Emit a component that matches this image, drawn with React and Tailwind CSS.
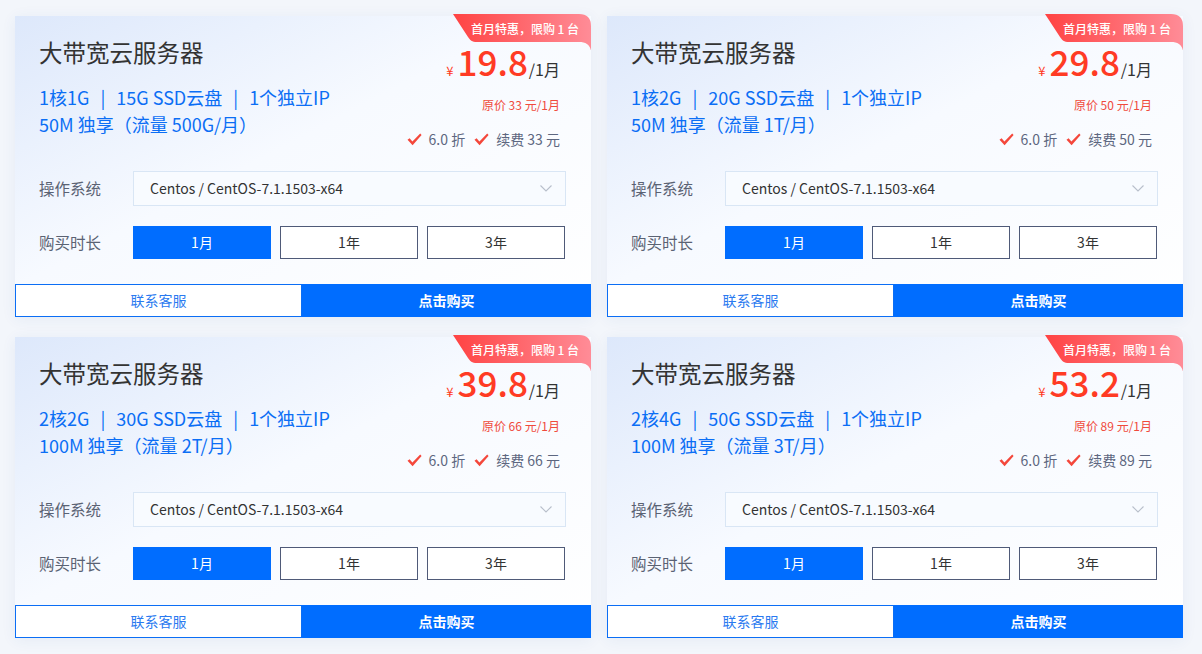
import React from "react";

const cards = [
  { spec1: ["1核1G", "15G SSD云盘", "1个独立IP"], spec2: "50M 独享（流量 500G/月）", price: "19.8", orig: "33" },
  { spec1: ["1核2G", "20G SSD云盘", "1个独立IP"], spec2: "50M 独享（流量 1T/月）", price: "29.8", orig: "50" },
  { spec1: ["2核2G", "30G SSD云盘", "1个独立IP"], spec2: "100M 独享（流量 2T/月）", price: "39.8", orig: "66" },
  { spec1: ["2核4G", "50G SSD云盘", "1个独立IP"], spec2: "100M 独享（流量 3T/月）", price: "53.2", orig: "89" },
];

function Check() {
  return (
    <svg width="15" height="13" viewBox="0 0 15 13" className="mr-[7px]">
      <path d="M0.5 6.8 L2.6 5.2 L5.4 8.4 L13.2 0.6 L14.6 1.9 L5.6 12.2 Z" fill="#f4473b" />
    </svg>
  );
}

function Badge() {
  return (
    <div className="absolute right-0 top-[-2px] w-[138px] h-[36px]">
      <svg width="138" height="36" viewBox="0 0 138 36" className="absolute inset-0">
        <defs>
          <linearGradient id="bg" x1="0" y1="0" x2="1" y2="0">
            <stop offset="0" stopColor="#ff4343" />
            <stop offset="1" stopColor="#ff8c97" />
          </linearGradient>
        </defs>
        <path
          d="M0 0 L126 0 Q138 0 138 12 L138 37 C137 31 133 28 126 28 L24 28 C19 28 17 26 15 23 Z"
          fill="url(#bg)"
        />
      </svg>
      <div className="relative h-[28px] pl-[16px] pr-[10px] flex items-center justify-center text-white text-[12px] font-medium leading-none pt-[2px]">
        首月特惠，限购 1 台
      </div>
    </div>
  );
}

function Card({ c }) {
  return (
    <div className="relative w-[576px] h-[301px] flex flex-col bg-white bg-gradient-to-br from-[#dde8fb] via-[#f7faff] via-45% to-white shadow-[0_2px_14px_rgba(40,80,150,0.07)]">
      <Badge />
      <div className="flex justify-between pl-[24px] pr-[31px] pt-[20px]">
        <div>
          <div className="text-[23.5px] leading-[32px] text-[#333]">大带宽云服务器</div>
          <div className="mt-[16px] text-[18px] leading-[27px] text-[#0b6ef5]">
            <div>
              {c.spec1[0]}
              <span className="mx-[11px]">|</span>
              {c.spec1[1]}
              <span className="mx-[11px]">|</span>
              {c.spec1[2]}
            </div>
            <div>{c.spec2}</div>
          </div>
        </div>
        <div className="flex flex-col items-end mt-[8px]">
          <div className="flex items-baseline">
            <span className="text-[13px] text-[#ff3b24] mr-[4px]">¥</span>
            <span className="text-[35px] leading-[34px] font-medium text-[#ff3b24]">{c.price}</span>
            <span className="text-[16px] text-[#333] ml-[1px]">/1月</span>
          </div>
          <div className="mt-[16px] text-[12px] leading-[16px] text-[#f04a3c]">原价 {c.orig} 元/1月</div>
          <div className="mt-[18px] flex items-center text-[14px] leading-[16px] text-[#5d6780]">
            <Check />
            <span>6.0 折</span>
            <span className="ml-[9px] flex"><Check /></span>
            <span>续费 {c.orig} 元</span>
          </div>
        </div>
      </div>
      <div className="pl-[24px] pr-[25px] mt-[24px]">
        <div className="flex items-center">
          <div className="w-[94px] text-[15.5px] text-[#5a6273]">操作系统</div>
          <div className="flex-1 h-[35px] border border-[#d9e6f5] bg-[#f8fbff] flex items-center justify-between pl-[16px] pr-[13px] text-[14px] text-[#333]">
            <span>Centos / CentOS-7.1.1503-x64</span>
            <svg width="12" height="7" viewBox="0 0 12 7">
              <path d="M0.5 0.5 L6 6 L11.5 0.5" fill="none" stroke="#b8bfcb" strokeWidth="1.1" />
            </svg>
          </div>
        </div>
        <div className="flex items-center mt-[20px]">
          <div className="w-[94px] text-[15.5px] text-[#5a6273]">购买时长</div>
          <div className="flex gap-[9px]">
            <div className="w-[138px] h-[33px] bg-[#006dff] text-white text-[14px] flex items-center justify-center">1月</div>
            <div className="w-[138px] h-[33px] border border-[#4f5a78] bg-white text-[#333] text-[14px] flex items-center justify-center">1年</div>
            <div className="w-[138px] h-[33px] border border-[#4f5a78] bg-white text-[#333] text-[14px] flex items-center justify-center">3年</div>
          </div>
        </div>
      </div>
      <div className="mt-auto flex h-[33px]">
        <div className="w-[287px] border border-[#0b6ef5] bg-white text-[#2a7af0] text-[14px] flex items-center justify-center">联系客服</div>
        <div className="flex-1 bg-[#006dff] text-white text-[14px] font-semibold flex items-center justify-center">点击购买</div>
      </div>
    </div>
  );
}

export default function App() {
  return (
    <div
      className="w-[1202px] h-[654px] bg-[#f3f6fb] pl-[15px] pt-[16px]"
      style={{ fontFamily: '"Noto Sans CJK SC", "Noto Sans", sans-serif' }}
    >
      <div className="grid grid-cols-[576px_576px] gap-x-[16px] gap-y-[20px]">
        {cards.map((c, i) => (
          <Card key={i} c={c} />
        ))}
      </div>
    </div>
  );
}
